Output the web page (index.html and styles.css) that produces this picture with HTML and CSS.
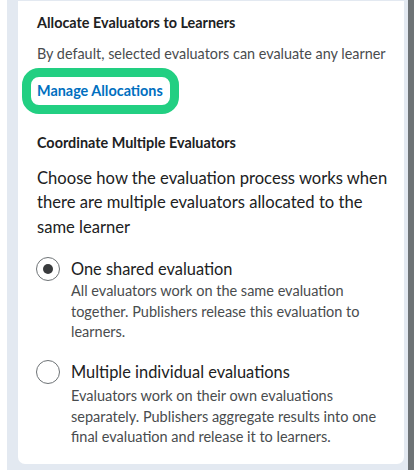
FILE: index.html
```html
<!DOCTYPE html>
<html lang="en">
<head>
<meta charset="utf-8">
<title>Evaluators</title>
<link rel="stylesheet" href="styles.css">
</head>
<body>
<div class="frame">
  <div class="backdrop">
    <div class="panel">
      <h3 class="heading">Allocate Evaluators to Learners</h3>
      <p class="hint">By default, selected evaluators can evaluate any learner</p>
      <div class="link-row"><a class="link focus" href="#">Manage Allocations</a></div>
      <h3 class="heading heading-2">Coordinate Multiple Evaluators</h3>
      <p class="intro">Choose how the evaluation process works when there are multiple evaluators allocated to the same learner</p>
      <div class="option">
        <span class="radio checked"></span>
        <div class="option-text">
          <div class="option-label">One shared evaluation</div>
          <div class="option-desc">All evaluators work on the same evaluation together. Publishers release this evaluation to learners.</div>
        </div>
      </div>
      <div class="option option-2">
        <span class="radio"></span>
        <div class="option-text">
          <div class="option-label">Multiple individual evaluations</div>
          <div class="option-desc desc-2">Evaluators work on their own evaluations separately. Publishers aggregate results into one final evaluation and release it to learners.</div>
        </div>
      </div>
    </div>
  </div>
  <div class="scrollbar"></div>
</div>
</body>
</html>
```

FILE: styles.css
```css
html, body {
  margin: 0;
  padding: 0;
  background: #ffffff;
}
body {
  font-family: Lato, "Noto Sans", sans-serif;
  color: #202122;
}
.frame {
  display: flex;
  height: 470px;
  padding-left: 7px;
  padding-right: 6px;
  box-sizing: border-box;
}
.backdrop {
  flex: 1;
  background: #e3e9f1;
  padding: 0 4px 6px 11px;
  display: flex;
  flex-direction: column;
  justify-content: flex-end;
}
.scrollbar {
  width: 6px;
  background: #6e7376;
}
.panel {
  background: #ffffff;
  border-radius: 0 0 7px 7px;
  padding: 12px 16px 16px 19px;
}
.heading {
  margin: 0;
  font-size: 14.4px;
  line-height: 20px;
  font-weight: 700;
  color: #202122;
}
.hint {
  margin: 11px 0 0;
  font-size: 14.4px;
  line-height: 20px;
  color: #494c4e;
}
.link-row {
  margin-top: 4px;
  margin-left: -15px;
}
.link {
  display: inline-block;
  font-size: 14.4px;
  line-height: 20px;
  font-weight: 700;
  color: #006fbf;
  text-decoration: none;
}
.focus {
  border: 9px solid #22cf82;
  border-radius: 17px;
  padding: 4px 7px 4px 6px;
}
.heading-2 {
  margin-top: 19px;
}
.intro {
  margin: 13px 0 0;
  font-size: 16.6px;
  line-height: 24.5px;
  color: #202122;
}
.option {
  display: flex;
  gap: 11px;
  margin-top: 18px;
  margin-left: -1px;
}
.option-2 {
  margin-top: 18px;
}
.radio {
  flex: none;
  width: 24px;
  height: 24px;
  box-sizing: border-box;
  border: 1.5px solid #6e7376;
  border-radius: 50%;
  display: flex;
  align-items: center;
  justify-content: center;
  background: #fff;
}
.radio.checked::after {
  content: "";
  width: 10px;
  height: 10px;
  border-radius: 50%;
  background: #393b3d;
}
.option-label {
  font-size: 16.4px;
  line-height: 24px;
  color: #202122;
}
.option-desc {
  margin-top: 0;
  font-size: 14.5px;
  line-height: 20.3px;
  color: #494c4e;
}
.desc-2 {
  margin-top: 2px;
  line-height: 20.6px;
}
```
